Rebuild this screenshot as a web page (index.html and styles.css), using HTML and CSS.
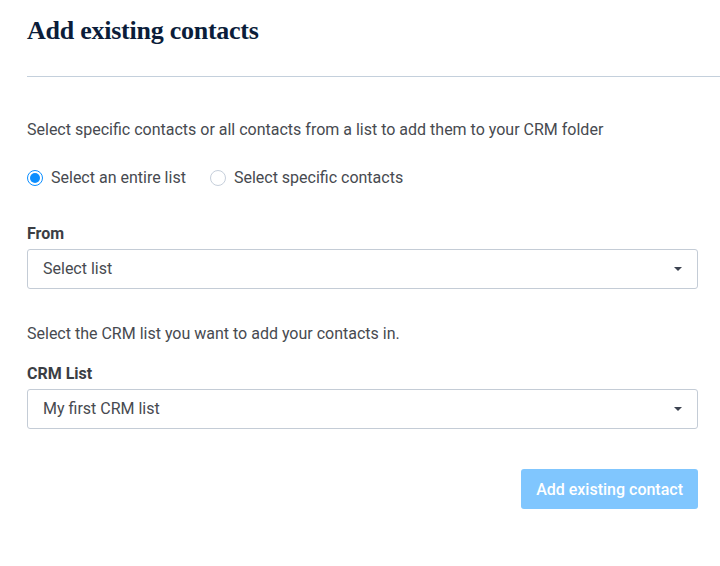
FILE: index.html
```html
<!DOCTYPE html>
<html lang="en">
<head>
<meta charset="utf-8">
<title>Add existing contacts</title>
<link rel="stylesheet" href="styles.css">
</head>
<body>
<div class="page">
  <header class="header">
    <h1 class="title">Add existing contacts</h1>
  </header>
  <div class="content">
    <p class="intro">Select specific contacts or all contacts from a list to add them to your CRM folder</p>
    <div class="radios">
      <label class="radio">
        <span class="radio-circle checked"></span>
        <span class="radio-text">Select an entire list</span>
      </label>
      <label class="radio">
        <span class="radio-circle"></span>
        <span class="radio-text">Select specific contacts</span>
      </label>
    </div>
    <div class="field">
      <div class="label">From</div>
      <div class="select">
        <span class="select-value">Select list</span>
        <span class="caret"></span>
      </div>
    </div>
    <p class="helper">Select the CRM list you want to add your contacts in.</p>
    <div class="field">
      <div class="label">CRM List</div>
      <div class="select">
        <span class="select-value">My first CRM list</span>
        <span class="caret"></span>
      </div>
    </div>
    <div class="actions">
      <button class="btn" type="button">Add existing contact</button>
    </div>
  </div>
</div>
</body>
</html>
```
FILE: styles.css
```css
* { box-sizing: border-box; }
html, body { margin: 0; padding: 0; background: #fff; }
body {
  font-family: Roboto, "Noto Sans", sans-serif;
  color: #474a50;
  font-size: 16px;
}
.page { width: 720px; }
.header {
  margin-left: 27px;
  height: 77px;
  border-bottom: 1px solid #c4d0dc;
  padding-top: 16px;
}
.title {
  margin: 0;
  font-family: "Liberation Serif", "DejaVu Serif", serif;
  font-weight: 700;
  font-size: 26px;
  line-height: 30px;
  color: #0b1d3a;
  letter-spacing: -0.25px;
}
.content { padding: 0 22px 0 27px; }
.intro {
  margin: 43px 0 0;
  line-height: 20px;
}
.radios {
  display: flex;
  gap: 24px;
  margin-top: 28px;
  height: 20px;
  align-items: center;
}
.radio { display: flex; align-items: center; gap: 8px; }
.radio-circle {
  width: 16px; height: 16px;
  border-radius: 50%;
  border: 1px solid #c6cfdb;
  display: flex; align-items: center; justify-content: center;
}
.radio-circle.checked { border-color: #0b8eff; }
.radio-circle.checked::after {
  content: "";
  width: 10px; height: 10px;
  border-radius: 50%;
  background: #0b8eff;
}
.radio-text { line-height: 20px; }
.field { margin-top: 36px; }
.label {
  font-weight: 700;
  line-height: 20px;
  color: #3b3e44;
  margin-bottom: 5px;
}
.select {
  height: 40px;
  border: 1px solid #c4ccd6;
  border-radius: 3px;
  display: flex;
  align-items: center;
  justify-content: space-between;
  padding: 0 15px 0 15px;
}
.select-value { line-height: 20px; }
.caret {
  width: 0; height: 0;
  border-left: 4px solid transparent;
  border-right: 4px solid transparent;
  border-top: 4px solid #3c4350;
}
.helper {
  margin: 35px 0 0;
  line-height: 20px;
}
.helper + .field { margin-top: 20px; }
.actions {
  display: flex;
  justify-content: flex-end;
  margin-top: 40px;
}
.btn {
  height: 40px;
  padding: 0 15px;
  border: none;
  border-radius: 3px;
  background: #80c6fe;
  color: #fff;
  font-family: Roboto, "Noto Sans", sans-serif;
  font-size: 16px;
  font-weight: 500;
}
```
